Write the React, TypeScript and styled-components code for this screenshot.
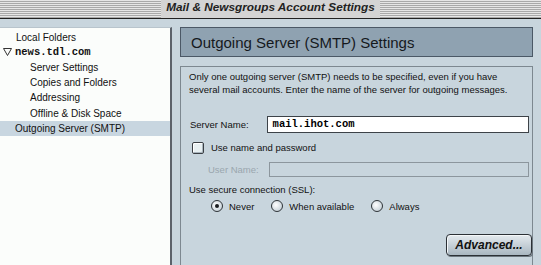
import styled, { createGlobalStyle } from 'styled-components';

const Global = createGlobalStyle`
  body {
    margin: 0;
    font-family: 'Liberation Sans', Arial, sans-serif;
  }
`;

const Window = styled.div`
  width: 541px;
  height: 265px;
  overflow: hidden;
  background: #c8d5dd;
  display: flex;
  flex-direction: column;
`;

const TitleBar = styled.div`
  height: 18px;
  flex: none;
  border-bottom: 1px solid #222;
  background: repeating-linear-gradient(
    to bottom,
    #e6e6e6 0px,
    #e6e6e6 1px,
    #a9a9a9 1px,
    #a9a9a9 2px
  );
  display: flex;
  align-items: center;
  justify-content: center;
`;

const Title = styled.div`
  background: #d4d4d4;
  padding: 0 5px;
  height: 18px;
  line-height: 18px;
  font: italic bold 11.8px 'Liberation Sans', Arial, sans-serif;
  color: #222;
`;

const Body = styled.div`
  flex: 1;
  display: grid;
  grid-template-columns: 172px 1fr;
  padding-top: 8px;
  min-height: 0;
`;

const Sidebar = styled.div`
  background: #fbfdfb;
  border-right: 2px solid #5c626a;
  border-top: 1px solid #b8c4cc;
  padding-top: 2px;
`;

const TreeItem = styled.div<{ $indent: number; $selected?: boolean; $first?: boolean }>`
  height: ${p => (p.$first ? '14px' : '15.4px')};
  padding-left: ${p => p.$indent}px;
  font-size: 10px;
  color: #111;
  background: ${p => (p.$selected ? '#c8d6e0' : 'transparent')};
  display: flex;
  align-items: center;
  gap: 3px;
`;

const Account = styled.span`
  font: bold 10.5px 'Liberation Mono', 'Courier New', monospace;
`;

const Main = styled.div`
  padding: 0 8px 0 8px;
  display: flex;
  flex-direction: column;
  gap: 9px;
`;

const Header = styled.div`
  height: 28px;
  border: 1px solid #4b5866;
  background: #8fa2b1;
  display: flex;
  align-items: center;
  padding-left: 10px;
  font-size: 15px;
  color: #15191d;
`;

const Group = styled.div`
  flex: 1;
  border: 1px solid #7d8890;
  border-bottom: none;
  padding: 3px 3px 0 8px;
  font-size: 9.5px;
  color: #111;
`;

const Para = styled.p`
  margin: 0 0 19px 0;
  line-height: 13px;
`;

const FieldRow = styled.div<{ $disabled?: boolean }>`
  display: flex;
  align-items: center;
  gap: ${p => (p.$disabled ? '10px' : '18px')};
  height: 18px;
  margin-bottom: ${p => (p.$disabled ? '5px' : '6px')};
  padding-left: ${p => (p.$disabled ? '19px' : '1px')};
  color: ${p => (p.$disabled ? '#9aa6ae' : '#111')};
`;

const TextBox = styled.div<{ $disabled?: boolean }>`
  flex: 1;
  height: ${p => (p.$disabled ? '15px' : '17px')};
  box-sizing: border-box;
  background: ${p => (p.$disabled ? '#c8d5dd' : '#ffffff')};
  border: 1px solid ${p => (p.$disabled ? '#8c969d' : '#3d4348')};
  display: flex;
  align-items: center;
  padding-left: 5px;
  font: bold 10.5px 'Liberation Mono', 'Courier New', monospace;
  color: #000;
`;

const CheckRow = styled.div`
  display: flex;
  align-items: center;
  gap: 7px;
  height: 18px;
  padding-left: 3px;
  margin-bottom: 3px;
`;

const Box = styled.span`
  width: 10px;
  height: 10px;
  border: 1px solid #3a3f44;
  border-radius: 2px;
  background: #e8f0f2;
  box-shadow: inset 1px 1px 0 #ffffff, inset -1px -1px 0 #aab6be;
`;

const Label = styled.div`
  height: 14px;
  line-height: 14px;
`;

const RadioRow = styled.div`
  display: flex;
  align-items: center;
  height: 18px;
  padding-left: 22px;
`;

const Radio = styled.label`
  display: flex;
  align-items: center;
  gap: 6px;
  margin-right: 17px;
`;

const Dot = styled.span<{ $on?: boolean }>`
  width: 10px;
  height: 10px;
  border-radius: 50%;
  border: 1px solid #2f3438;
  background: radial-gradient(circle at 40% 40%, #ffffff, #b8c6cf);
  display: flex;
  align-items: center;
  justify-content: center;
  &::after {
    content: '';
    width: 4px;
    height: 4px;
    border-radius: 50%;
    background: ${p => (p.$on ? '#1a1d20' : 'transparent')};
  }
`;

const ButtonRow = styled.div`
  display: flex;
  justify-content: flex-end;
  margin-top: 19px;
  margin-right: -3px;
`;

const Button = styled.div`
  width: 86px;
  height: 22px;
  box-sizing: border-box;
  border: 1px solid #2c3136;
  border-radius: 4px;
  background: linear-gradient(#e4eaee, #a9b7c1);
  box-shadow: 1px 1px 0 #6d7880, inset 1px 1px 0 #f4f7f9;
  display: flex;
  align-items: center;
  justify-content: center;
  font: italic bold 12px 'Liberation Sans', Arial, sans-serif;
  color: #111;
`;

function App() {
  return (
    <Window>
      <Global />
      <TitleBar>
        <Title>Mail &amp; Newsgroups Account Settings</Title>
      </TitleBar>
      <Body>
        <Sidebar>
          <TreeItem $indent={16} $first>Local Folders</TreeItem>
          <TreeItem $indent={3}>
            <svg width="9" height="8" viewBox="0 0 9 8">
              <path d="M0.5 0.5 H8.5 L4.5 7.5 Z" fill="none" stroke="#333" strokeWidth="1" />
            </svg>
            <Account>news.tdl.com</Account>
          </TreeItem>
          <TreeItem $indent={30}>Server Settings</TreeItem>
          <TreeItem $indent={30}>Copies and Folders</TreeItem>
          <TreeItem $indent={30}>Addressing</TreeItem>
          <TreeItem $indent={30}>Offline &amp; Disk Space</TreeItem>
          <TreeItem $indent={15} $selected>Outgoing Server (SMTP)</TreeItem>
        </Sidebar>
        <Main>
          <Header>Outgoing Server (SMTP) Settings</Header>
          <Group>
            <Para>
              Only one outgoing server (SMTP) needs to be specified, even if you have
              several mail accounts. Enter the name of the server for outgoing messages.
            </Para>
            <FieldRow>
              Server Name:
              <TextBox>mail.ihot.com</TextBox>
            </FieldRow>
            <CheckRow>
              <Box />
              <Label>Use name and password</Label>
            </CheckRow>
            <FieldRow $disabled>
              User Name:
              <TextBox $disabled />
            </FieldRow>
            <Label>Use secure connection (SSL):</Label>
            <RadioRow>
              <Radio><Dot $on />Never</Radio>
              <Radio><Dot />When available</Radio>
              <Radio><Dot />Always</Radio>
            </RadioRow>
            <ButtonRow>
              <Button>Advanced...</Button>
            </ButtonRow>
          </Group>
        </Main>
      </Body>
    </Window>
  );
}

export default App;
